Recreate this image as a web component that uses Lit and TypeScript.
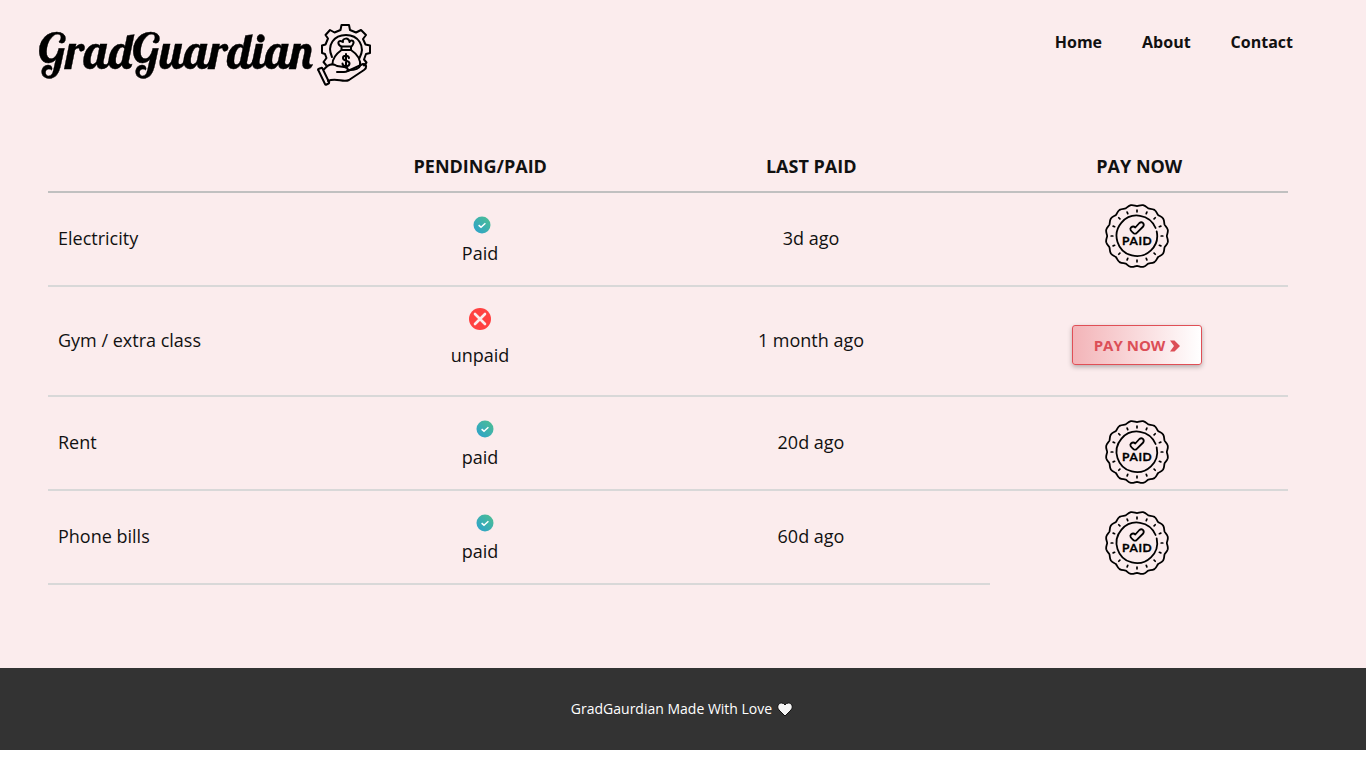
import { LitElement, html, css } from "lit";
import { customElement } from "lit/decorators.js";

interface Bill {
  name: string;
  status: string;
  paid: boolean;
  last: string;
  kind: string;
}

const BILLS: Bill[] = [
  { name: "Electricity", status: "Paid", paid: true, last: "3d ago", kind: "first" },
  { name: "Gym / extra class", status: "unpaid", paid: false, last: "1 month ago", kind: "due" },
  { name: "Rent", status: "paid", paid: true, last: "20d ago", kind: "rent" },
  { name: "Phone bills", status: "paid", paid: true, last: "60d ago", kind: "phone" },
];

const polar = (cx: number, cy: number, r: number, deg: number) => {
  const a = (deg * Math.PI) / 180;
  return `${(cx + r * Math.sin(a)).toFixed(2)} ${(cy - r * Math.cos(a)).toFixed(2)}`;
};

/* Scalloped rim of the stamp: sixteen lobes with a dip on each axis */
const rim = (() => {
  let d = `M${polar(32, 32, 29.8, 0)}`;
  for (let i = 0; i < 16; i++) {
    const a = i * 22.5;
    d += `C${polar(32, 32, 30.1, a + 4)} ${polar(32, 32, 31.4, a + 6)} ${polar(32, 32, 31.4, a + 11.25)}`;
    d += `C${polar(32, 32, 31.4, a + 16.5)} ${polar(32, 32, 30.1, a + 18.5)} ${polar(32, 32, 29.8, a + 22.5)}`;
  }
  return d + "Z";
})();

const ticks = Array.from({ length: 16 }, (_, i) => `M${polar(32, 32, 24.2, i * 22.5)}L${polar(32, 32, 25.8, i * 22.5)}`).join("");

@customElement("app-root")
export class AppRoot extends LitElement {
  static styles = css`
    :host { display: block; font-family: "Open Sans", sans-serif; color: #111; }
    .page { background: #fbeced; height: 668px; box-sizing: border-box; }
    .header { height: 142px; display: flex; justify-content: space-between; box-sizing: border-box; padding: 21px 73px 0 36px; }
    .brand { display: flex; height: 68px; }
    .word { width: 280px; height: 68px; overflow: visible; display: block; }
    .word text { font-family: Lobster, "Liberation Serif", serif; font-size: 49px; fill: #000; stroke: #000; stroke-width: 0.35px; }
    .mark { width: 56px; height: 64px; margin-top: 2px; display: block; }
    .nav { display: flex; gap: 40px; padding-top: 10px; font-size: 16px; line-height: 22px; font-weight: 700; }
    .table { width: 1240px; margin-left: 48px; font-size: 18px; line-height: 25px; }
    .row { display: grid; grid-template-columns: 280px 304px 358px 298px; }
    .cell { border-bottom: 2px solid #d8d8d8; box-sizing: border-box; display: flex; flex-direction: column; align-items: center; justify-content: center; padding-bottom: 2px; }
    .head { height: 51px; }
    .head .cell { border-color: #c0c0c0; font-weight: 700; padding: 0 0 0 0.5px; }
    .first, .rent, .phone { height: 94px; }
    .due { height: 110px; }
    .name { align-items: flex-start; padding-left: 10px; }
    .phone .action { border-bottom-color: transparent; }
    .status { justify-content: flex-start; }
    .ok { width: 18px; height: 18px; margin: 23px 0 7px 4px; display: block; }
    .rent .ok, .phone .ok { margin-left: 10px; }
    .no { width: 22px; height: 22px; margin: 21px 0 13px; display: block; }
    .stamp { width: 64px; height: 64px; margin-right: 4px; display: block; overflow: visible; }
    .action { justify-content: flex-start; padding-top: 11px; padding-bottom: 0; }
    .rent .action { padding-top: 23px; }
    .phone .action { padding-top: 20px; }
    .due .action { padding-top: 38px; }
    .stamp text { font: 700 12px Lato, "Liberation Sans", sans-serif; letter-spacing: 0.8px; }
    .pay { width: 130px; height: 40px; margin-right: 4px; box-sizing: border-box; border: 1px solid #e04f56; border-radius: 3px; background: linear-gradient(90deg, #f3b4b8, #fff); color: #dc4f57; font: 700 15px/20px "Open Sans", sans-serif; display: flex; align-items: center; justify-content: center; gap: 5px; padding: 0; box-shadow: 0 2px 5px rgba(0, 0, 0, 0.28); }
    .chevron { width: 10px; height: 12px; display: block; margin-top: 2px; }
    .footer { height: 82px; background: #333; color: #fff; display: flex; align-items: center; justify-content: center; gap: 5px; font-size: 14px; line-height: 20px; padding-right: 2px; box-sizing: border-box; }
    .heart { width: 16px; height: 15px; display: block; margin-top: 1px; }
  `;

  private mark() {
    return html`<svg class="mark" viewBox="0 0 56 64" fill="none" stroke="#000" stroke-width="2" stroke-linecap="round" stroke-linejoin="round">
      <path d="M10 42 7.5 39 10.5 35 9 31 6 30V22.5L9.5 21.5 12 15.5 9.5 12 14 7 18.5 9.5 24.5 7 25.5 2H33L34 7 40 9.5 45 7 50 12 47 16 49.5 21.5 54 22.5V30L50 31 48 36.5 50.5 39.5 48 42.5" />
      <path d="M16 34C10.5 22 18 12 30 12S50 23 43.5 35" />
      <path d="M25.5 23.5C21.5 22 21.5 18 24.5 18C25.5 18 26 19 27 19C25.5 15 33.500 14 33.500 19C35 16 38 18 37.500 20C37 22 36 23 35.500 23.500ZM25.500 23.500H35V27H25.500ZM25.500 27C20 31 16.500 35 16.500 41M35 27C41 31 45 36 44 43C43 46 39 47 33 47" />
      <path d="M33 35C32.500 32 27 32 27 35C27 38.500 33.500 37 33.500 40.500C33.500 44 26.500 44 26.500 40.500M30 31V44.500" />
      <path d="M2.500 47.500Q1.500 46.500 2.500 46L5 45Q6 44.500 6.500 45.500L13 59Q13.500 60 12.500 60.500L10.500 61.500Q9.500 62 9 61ZM7.500 47C12 41 16.500 40 21 43L28 44C33 44 33 49 28 49H21M32 48 47 41C51 41 51 45 48 47L33 57C27 60 20 54 12 58" />
    </svg>`;
  }

  private stamp() {
    return html`<svg class="stamp" viewBox="0 0 64 64" fill="none" stroke="#000" stroke-width="1.8" stroke-linecap="round" stroke-linejoin="round">
      <path d=${rim} />
      <path d=${ticks} stroke-width="1.7" />
      <path d="M50.6 24A20.3 20.3 0 1 0 51.7 27.5" />
      <path d="M26 23.500C24.400 25 25.800 27 28.600 29.200C29.800 30 30.800 29.800 31.800 28.800L38.200 22.500C39.800 20 37 16.800 34.400 19L30.300 23.500C28.800 22 27.400 22.200 26 23.500Z" />
      <text x="17" y="41.3" textLength="30.500" lengthAdjust="spacing" fill="#000" stroke="#000" stroke-width="0.3">PAID</text>
    </svg>`;
  }

  private statusIcon(b: Bill) {
    return b.paid
      ? html`<svg class="ok" viewBox="0 0 18 18"><defs><linearGradient id="g" x1="1" y1="0" x2="0" y2="1"><stop stop-color="#4fc08f" /><stop offset="1" stop-color="#2aa0d0" /></linearGradient></defs><circle cx="9" cy="9" r="8.5" fill="url(#g)" /><path d="M5.6 9.2 8 11.2 12.4 7.2" fill="none" stroke="#fff" stroke-width="1.5" /></svg>`
      : html`<svg class="no" viewBox="0 0 22 22"><circle cx="11" cy="11" r="11" fill="#ff4141" /><path d="M6 6 16 16M16 6 6 16" stroke="#fbeced" stroke-width="2.6" stroke-linecap="round" /></svg>`;
  }

  private action(b: Bill) {
    return b.paid
      ? this.stamp()
      : html`<button class="pay">PAY NOW<svg class="chevron" viewBox="0 0 10 12" fill="#dc4f57"><path d="M0 .5H4.500L10 6 4.500 11.500H0L4 6Z" /></svg></button>`;
  }

  render() {
    return html`
      <div class="page">
        <header class="header">
          <div class="brand">
            <svg class="word" viewBox="0 0 280 68">
              <text x="2.2" y="48" textLength="274.500" lengthAdjust="spacingAndGlyphs">GradGuardian</text>
            </svg>
            ${this.mark()}
          </div>
          <nav class="nav"><span>Home</span><span>About</span><span>Contact</span></nav>
        </header>
        <div class="table">
          <div class="row head">
            <div class="cell"></div><div class="cell">PENDING/PAID</div><div class="cell">LAST PAID</div><div class="cell">PAY NOW</div>
          </div>
          ${BILLS.map((b) => html`<div class="row ${b.kind}">
            <div class="cell name">${b.name}</div>
            <div class="cell status">${this.statusIcon(b)}<span>${b.status}</span></div>
            <div class="cell">${b.last}</div>
            <div class="cell action">${this.action(b)}</div>
          </div>`)}
        </div>
      </div>
      <footer class="footer"><span>GradGaurdian Made With Love</span><svg class="heart" viewBox="0 0 16 15"><path d="M8 14 2 8C-1 4 2 1 4.5 1Q7 1 8 3Q9 1 11.5 1C14 1 17 4 14 8Z" fill="#f5f5f5" stroke="#111" stroke-width="1" /></svg></footer>
    `;
  }
}
